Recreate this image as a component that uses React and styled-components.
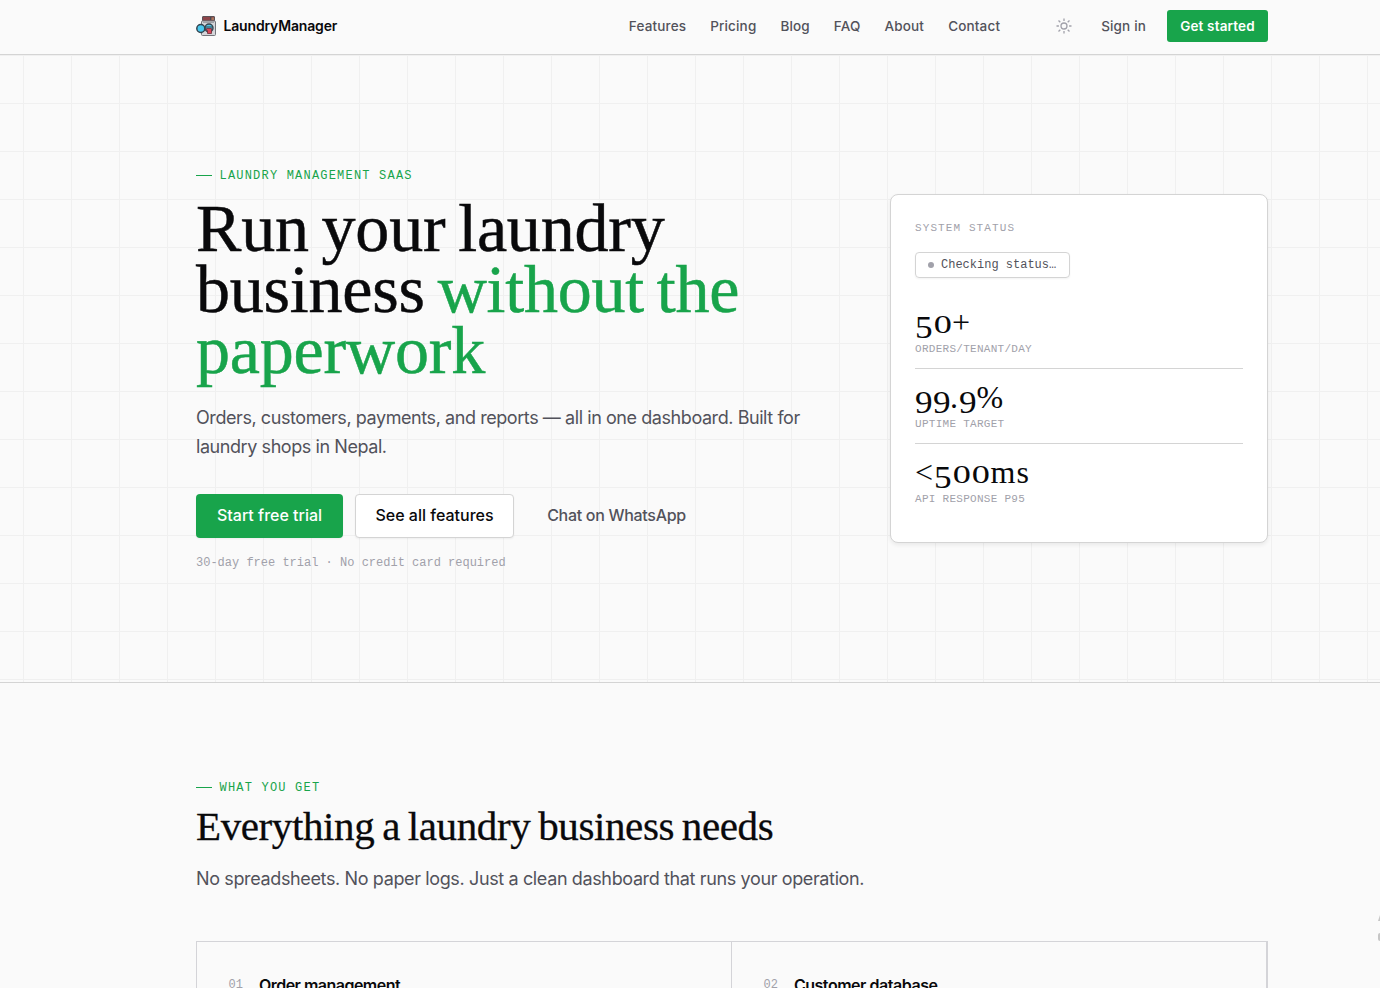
import React from "react";
import styled, { createGlobalStyle } from "styled-components";

const navLinks = ["Features", "Pricing", "Blog", "FAQ", "About", "Contact"];

const stats = [
  { value: "50+", label: "ORDERS/TENANT/DAY" },
  { value: "99.9%", label: "UPTIME TARGET" },
  { value: "<500ms", label: "API RESPONSE P95" },
];

const features = [
  { number: "01", title: "Order management", spacing: "-0.52px" },
  { number: "02", title: "Customer database", spacing: "-0.47px" },
];

function Logo() {
  return (
    <svg width="20" height="20" viewBox="0 0 20 20">
      <rect x="6.5" y="0.5" width="12" height="4.5" rx="0.5" fill="#8d4449" stroke="#5a5257" />
      <rect x="14" y="1" width="1.5" height="3" fill="#4b4a50" />
      <rect x="15.5" y="1.5" width="2.5" height="2.5" fill="#a8745c" />
      <rect x="5.5" y="5" width="14" height="14.5" rx="1" fill="#d5d6da" stroke="#73757b" />
      <path d="M7 6.5h11" stroke="#9fa1a8" />
      <circle cx="13" cy="12" r="4" fill="#55c5e4" stroke="#34434e" strokeWidth="1.4" />
      <path d="M9.5 11h7" stroke="#34434e" />
      <circle cx="4.8" cy="12.5" r="4" fill="#49c8ee" stroke="#34434e" strokeWidth="1.5" />
      <path d="M10.5 12.5h5v5h-4v-3h-1z" fill="#d94758" stroke="#6c2d3a" strokeWidth="0.8" />
    </svg>
  );
}

function SunIcon() {
  return (
    <svg width="16" height="16" viewBox="0 0 16 16" fill="none" stroke="#a1a1aa" strokeWidth="1.3">
      <circle cx="8" cy="8" r="3" />
      <path d="M8 .5v2.4M8 13.1v2.4M.5 8h2.4M13.1 8h2.4M2.5 2.5l1.8 1.8M11.7 11.7l1.8 1.8M2.5 13.5l1.8-1.8M11.7 4.3l1.8-1.8" />
    </svg>
  );
}

// old-style figures: the zero sits at x-height, 5 and 9 hang below the baseline
function Figures({ value }) {
  return (
    <StatValue>
      {value.split("").map((char, index) => {
        if (char === "0") return <Zero key={index}>0</Zero>;
        if (char === "5" || char === "9") return <Hanging key={index}>{char}</Hanging>;
        return <Glyph key={index}>{char}</Glyph>;
      })}
    </StatValue>
  );
}

function App() {
  return (
    <Page>
      <GlobalStyle />
      <Header>
        <Brand>
          <Logo />
          <span>LaundryManager</span>
        </Brand>
        <Nav>
          {navLinks.map((link) => (
            <NavLink key={link}>{link}</NavLink>
          ))}
        </Nav>
        <Actions>
          <SunIcon />
          <NavLink>Sign in</NavLink>
          <GetStarted>Get started</GetStarted>
        </Actions>
      </Header>

      <Hero>
        <div>
          <Eyebrow>LAUNDRY MANAGEMENT SAAS</Eyebrow>
          <Title>
            Run your laundry
            <br />
            business <em>without the</em>
            <br />
            <em>paperwork</em>
          </Title>
          <Lead $spacing="-0.43px">
            Orders, customers, payments, and reports — all in one dashboard. Built for
            <br />
            laundry shops in Nepal.
          </Lead>
          <Buttons>
            <Button $variant="primary" $width="147px">
              Start free trial
            </Button>
            <Button $variant="outline" $width="159px">
              See all features
            </Button>
            <Button $width="181px">Chat on WhatsApp</Button>
          </Buttons>
          <Note>30-day free trial · No credit card required</Note>
        </div>
        <StatusCard>
          <CardLabel>SYSTEM STATUS</CardLabel>
          <Status>
            <Dot />
            Checking status…
          </Status>
          {stats.map((stat) => (
            <Stat key={stat.label}>
              <Figures value={stat.value} />
              <StatLabel>{stat.label}</StatLabel>
            </Stat>
          ))}
        </StatusCard>
      </Hero>

      <Section>
        <Eyebrow>WHAT YOU GET</Eyebrow>
        <Heading>Everything a laundry business needs</Heading>
        <Lead $spacing="-0.37px">
          No spreadsheets. No paper logs. Just a clean dashboard that runs your operation.
        </Lead>
        <FeatureGrid>
          {features.map((feature) => (
            <Feature key={feature.number} $spacing={feature.spacing}>
              <span>{feature.number}</span>
              <h3>{feature.title}</h3>
            </Feature>
          ))}
        </FeatureGrid>
      </Section>
      <EdgeMark>
        <i />
        <b />
      </EdgeMark>
    </Page>
  );
}

export default App;

const sans = `Inter, "Liberation Sans", sans-serif`;
const mono = `"Liberation Mono", monospace`;
const serif = `"Liberation Serif", serif`;

const GlobalStyle = createGlobalStyle`
  * {
    box-sizing: border-box;
  }
  body {
    margin: 0;
    overflow: hidden;
    background: #fafafa;
    color: #09090b;
    font-family: ${sans};
  }
  h1, h2, h3, p {
    margin: 0;
    font-weight: 400;
  }
`;
const Page = styled.div`
  position: relative;
  height: 988px;
  overflow: hidden;
`;
const Header = styled.header`
  display: flex;
  align-items: center;
  height: 55px;
  padding: 0 112px 2px 196px;
  border-bottom: 1px solid #d4d4d4;
`;
const Brand = styled.div`
  display: flex;
  align-items: center;
  gap: 7.5px;
  font-size: 14px;
  line-height: 20px;
  font-weight: 600;
  letter-spacing: -0.17px;
  span {
    margin-top: -1px;
  }
`;
const Nav = styled.nav`
  display: flex;
  gap: 24px;
  margin-left: auto;
`;
const NavLink = styled.a`
  font-size: 13.5px;
  font-weight: 500;
  letter-spacing: 0.16px;
  color: #52525b;
  white-space: nowrap;
`;
const Actions = styled.div`
  display: flex;
  align-items: center;
  margin-left: 56px;
  svg {
    margin-right: 29px;
  }
`;
const GetStarted = styled.button`
  width: 101px;
  height: 32px;
  margin-left: 21px;
  padding: 0;
  border: 0;
  border-radius: 3px;
  background: #18a44b;
  color: #fff;
  font: 600 13.5px ${sans};
  letter-spacing: 0.15px;
`;
const Hero = styled.section`
  display: flex;
  justify-content: space-between;
  height: 628px;
  padding: 112px 112px 0 196px;
  border-bottom: 1px solid #d4d4d4;
  background-image: linear-gradient(#f0f0f0 1px, transparent 1px),
    linear-gradient(90deg, #f0f0f0 1px, transparent 1px);
  background-size: 48px 48px;
  background-position: 23px 0;
`;
const Eyebrow = styled.div`
  display: flex;
  align-items: center;
  gap: 7.5px;
  height: 16px;
  padding-top: 2px;
  font: 12px/16px ${mono};
  letter-spacing: 1.2px;
  color: #18a44b;
  &::before {
    content: "";
    width: 16px;
    height: 1px;
    margin-top: -2px;
    background: #18a44b;
  }
`;
const Title = styled.h1`
  margin-top: 15px;
  font: 400 68px/60.8px ${serif};
  letter-spacing: -0.2px;
  word-spacing: -4px;
  white-space: nowrap;
  -webkit-text-stroke: 0.5px;
  em {
    font-style: normal;
    color: #18a44b;
  }
`;
const Lead = styled.p`
  margin-top: 23px;
  font-size: 18px;
  line-height: 29px;
  letter-spacing: ${(props) => props.$spacing};
  white-space: nowrap;
  color: #52525b;
`;
const Buttons = styled.div`
  display: flex;
  gap: 12px;
  margin-top: 33px;
`;
const Button = styled.button`
  width: ${(props) => props.$width};
  height: 44px;
  padding: 0 0 2px;
  border: 1px solid transparent;
  border-radius: 4px;
  background: transparent;
  color: #52525b;
  font: 500 16px ${sans};
  letter-spacing: ${(props) => (props.$variant ? "0" : "-0.3px")};
  white-space: nowrap;
  ${(props) =>
    props.$variant === "primary" &&
    `
    background: #18a44b;
    color: #fff;
    box-shadow: 0 1px 2px #0000000d;
  `}
  ${(props) =>
    props.$variant === "outline" &&
    `
    background: #fff;
    border-color: #d4d4d4;
    color: #09090b;
    box-shadow: 0 1px 2px #0000000d;
  `}
`;
const Note = styled.p`
  margin-top: 17px;
  font: 12px/16px ${mono};
  color: #a1a1aa;
`;
const StatusCard = styled.aside`
  width: 378px;
  height: 349px;
  margin-top: 27px;
  padding: 25px 24px 0;
  border: 1px solid #d4d4d4;
  border-radius: 8px;
  background: #fff;
  box-shadow: 0 2px 4px #00000012;
`;
const CardLabel = styled.div`
  font: 11px/16px ${mono};
  letter-spacing: 1.1px;
  color: #a1a1aa;
`;
const Status = styled.div`
  display: flex;
  align-items: center;
  gap: 7px;
  width: 155px;
  height: 26px;
  margin: 16px 0;
  padding-left: 12px;
  border: 1px solid #d4d4d4;
  border-radius: 4px;
  font: 12px/16px ${mono};
  white-space: nowrap;
  color: #52525b;
  box-shadow: 0 1px 2px #0000000d;
`;
const Dot = styled.i`
  width: 6px;
  height: 6px;
  border-radius: 50%;
  background: #a1a1aa;
`;
const Stat = styled.div`
  height: 75px;
  padding-top: 12px;
  border-bottom: 1px solid #d4d4d4;
  &:last-child {
    border-bottom: 0;
  }
`;
const StatValue = styled.div`
  display: flex;
  align-items: baseline;
  height: 32px;
  font: 400 32px/32px ${serif};
`;
const Glyph = styled.span`
  letter-spacing: 1px;
`;
const Hanging = styled.span`
  width: 17.5px;
  transform: translateY(5px) scaleX(1.1);
  transform-origin: left;
`;
const Zero = styled.span`
  width: 19.5px;
  font-size: 25px;
  text-align: center;
  transform: scaleX(1.45);
`;
const StatLabel = styled.div`
  margin-top: 3px;
  font: 11px/16px ${mono};
  letter-spacing: 0.275px;
  color: #a1a1aa;
`;
const Section = styled.section`
  margin-left: 196px;
  padding-top: 96px;
  ${Lead} {
    margin-top: 16px;
  }
`;
const Heading = styled.h2`
  margin-top: 9px;
  font: 400 41px/44px ${serif};
  letter-spacing: -0.39px;
  word-spacing: -2px;
  white-space: nowrap;
  -webkit-text-stroke: 0.3px;
`;
const FeatureGrid = styled.div`
  display: grid;
  grid-template-columns: 535px 535px;
  width: 1072px;
  margin-top: 48px;
  border: 1px solid #d4d4d8;
`;
const Feature = styled.div`
  display: flex;
  align-items: center;
  gap: 16px;
  height: 160px;
  padding: 0 0 74px 31.5px;
  border-right: 1px solid #d4d4d8;
  span {
    font: 12px ${mono};
    color: #a1a1aa;
  }
  h3 {
    font-size: 16px;
    font-weight: 600;
    letter-spacing: ${(props) => props.$spacing};
  }
`;
/* slice of the floating widget that peeks in from the right edge */
const EdgeMark = styled.div`
  position: absolute;
  right: 0;
  top: 915px;
  i {
    display: block;
    width: 2px;
    height: 6px;
    background: #c6c6c6;
    clip-path: polygon(100% 0, 100% 100%, 0 100%);
  }
  b {
    display: block;
    width: 2px;
    height: 8px;
    margin-top: 12px;
    border-radius: 2px 0 0 2px;
    background: #c6c6c6;
  }
`;
